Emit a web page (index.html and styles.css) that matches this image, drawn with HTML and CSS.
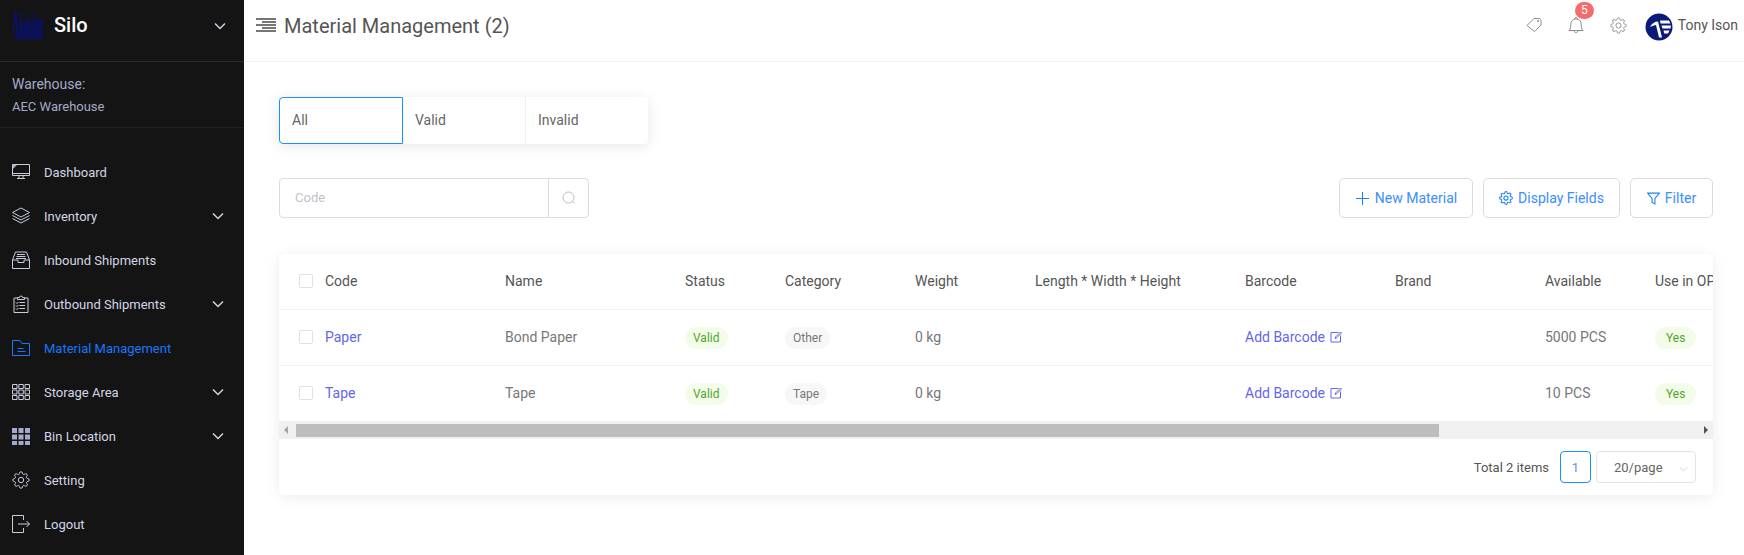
FILE: index.html
```html
<!DOCTYPE html>
<html lang="en">
<head>
<meta charset="utf-8">
<title>Material Management</title>
<link rel="stylesheet" href="styles.css">
</head>
<body>
<svg class="defs" width="0" height="0" aria-hidden="true">
  <symbol id="gear" viewBox="0 0 24 24"><circle cx="12" cy="12" r="3.6"/><path d="M19.4 15a1.65 1.65 0 0 0 .33 1.82l.06.06a2 2 0 0 1 0 2.83 2 2 0 0 1-2.83 0l-.06-.06a1.65 1.65 0 0 0-1.82-.33 1.65 1.65 0 0 0-1 1.51V21a2 2 0 0 1-2 2 2 2 0 0 1-2-2v-.09A1.65 1.65 0 0 0 9 19.4a1.65 1.65 0 0 0-1.82.33l-.06.06a2 2 0 0 1-2.83 0 2 2 0 0 1 0-2.83l.06-.06a1.65 1.65 0 0 0 .33-1.82 1.65 1.65 0 0 0-1.51-1H3a2 2 0 0 1-2-2 2 2 0 0 1 2-2h.09A1.65 1.65 0 0 0 4.6 9a1.65 1.65 0 0 0-.33-1.82l-.06-.06a2 2 0 0 1 0-2.83 2 2 0 0 1 2.83 0l.06.06a1.65 1.65 0 0 0 1.82.33H9a1.65 1.65 0 0 0 1-1.51V3a2 2 0 0 1 2-2 2 2 0 0 1 2 2v.09a1.65 1.65 0 0 0 1 1.51 1.65 1.65 0 0 0 1.82-.33l.06-.06a2 2 0 0 1 2.83 0 2 2 0 0 1 0 2.83l-.06.06a1.65 1.65 0 0 0-.33 1.82V9a1.65 1.65 0 0 0 1.51 1H21a2 2 0 0 1 2 2 2 2 0 0 1-2 2h-.09a1.65 1.65 0 0 0-1.51 1z"/></symbol>
  <symbol id="chev" viewBox="0 0 12 8"><path d="M1 1.500l5 5 5-5"/></symbol>
  <symbol id="edit" viewBox="0 0 12 12"><path d="M8.500 1.500H1v9.500h9.500V4.500M5 7.500l1-2L10.500 1 11.500 2 7 6.500z"/></symbol>
</svg>
<div class="app">
  <aside class="side">
    <div class="brand">
      <svg class="logo" viewBox="0 0 32 32"><path d="M1 28Q2 10 4 2L5 28M3 2Q4 14 6 28M8 30V2M10 30V12M12 30V12M14 28V10M16 30V3M18 30V12M20 28V12M22 30V2M24 30V10M26 28V10M28 30V8M30 30V10"/></svg>
      <span class="brand-name">Silo</span>
      <svg class="chev brand-chev"><use href="#chev"/></svg>
    </div>
    <div class="wh">
      <div class="wh-label">Warehouse:</div>
      <div class="wh-name">AEC Warehouse</div>
    </div>
    <nav class="nav">
      <a class="nav-item">
        <svg class="ico" viewBox="0 0 18 18"><path d="M.5 1.500h17v11H.5zM.5 10.500h17M7 12.500v2.500M11 12.500v2.500M5 15.500h8"/><path class="fill-soft" d="M1 2h4L1 6z"/></svg>
        <span>Dashboard</span>
      </a>
      <a class="nav-item">
        <svg class="ico" viewBox="0 0 18 18"><path d="M9 1l8.500 4.500L9 10 .5 5.500zM.5 8.500L9 13l8.500-4.500M.5 11.500L9 16l8.500-4.500"/></svg>
        <span>Inventory</span>
        <svg class="chev nav-chev"><use href="#chev"/></svg>
      </a>
      <a class="nav-item">
        <svg class="ico" viewBox="0 0 18 18"><path d="M3.500 1h11l3 8v8.500H.5V9zM.5 9h5.500v2.500h6V9h5.500M5 3.500h8M4.500 5.500h9M4 7.500h10"/></svg>
        <span>Inbound Shipments</span>
      </a>
      <a class="nav-item">
        <svg class="ico" viewBox="0 0 18 18"><path d="M5.500 3H2v14.500h14V3h-3.500M5.500 4.500V2.500H7.500a1.500 1.500 0 0 1 3 0h2v2zM7.500 7.500H13M7.500 10.500H13M7.500 13.500H13M4 7.500l1 1 1.500-1.500M4 10.500l1 1 1.500-1.500M4 13.500l1 1 1.500-1.500"/></svg>
        <span>Outbound Shipments</span>
        <svg class="chev nav-chev"><use href="#chev"/></svg>
      </a>
      <a class="nav-item active">
        <svg class="ico" viewBox="0 0 18 18"><path d="M.5 1.500H8L10 4.500h7.500v12H.5zM5.500 9.500h6M5.500 12.500h8"/></svg>
        <span>Material Management</span>
      </a>
      <a class="nav-item">
        <svg class="ico" viewBox="0 0 18 18"><path d="M.5 1.500h4.500v4H.5zM6.800 1.500h4.500v4H6.800zM13 1.500h4.500v4H13zM.5 7h4.500v4H.5zM6.800 7h4.500v4H6.800zM13 7h4.500v4H13zM.5 12.500h4.500v4H.5zM6.800 12.500h4.500v4H6.800zM13 12.500h4.500v4H13z"/></svg>
        <span>Storage Area</span>
        <svg class="chev nav-chev"><use href="#chev"/></svg>
      </a>
      <a class="nav-item">
        <svg class="ico ico-solid" viewBox="0 0 18 18"><path d="M0 1h5v5H0zM6.500 1h5v5h-5zM13 1h5v5h-5zM0 7.500h5v5H0zM6.500 7.500h5v5h-5zM13 7.500h5v5h-5zM0 14h5v5H0zM6.500 14h5v5h-5zM13 14h5v5h-5z"/></svg>
        <span>Bin Location</span>
        <svg class="chev nav-chev"><use href="#chev"/></svg>
      </a>
      <a class="nav-item">
        <svg class="ico ico-gear"><use href="#gear"/></svg>
        <span>Setting</span>
      </a>
      <a class="nav-item">
        <svg class="ico" viewBox="0 0 18 18"><path d="M11.500 5V.5H.5v17h11V13M6 9h11.500M14.500 6l3 3-3 3"/></svg>
        <span>Logout</span>
      </a>
    </nav>
  </aside>

  <main class="main">
    <header class="top">
      <svg class="burger" viewBox="0 0 20 14"><path d="M0 1h20M6 4h14M0 7h20M6 10h14M0 13h20"/></svg>
      <h1 class="title">Material Management (2)</h1>
      <div class="top-actions">
        <svg class="top-ico tag" viewBox="0 0 16 16"><path d="M1 8.500L8 1.500h5.500l1.500 1.500v5l-6.500 6.500zM11.500 3.500h1v1h-1z"/></svg>
        <span class="bell">
          <svg class="top-ico" viewBox="0 0 16 18"><path d="M1 14.500c1.500-1.500 1.800-3 1.800-6 0-3.300 2-5.500 5.200-5.500s5.200 2.200 5.200 5.500c0 3 .3 4.500 1.800 6zM6.500 3c0-2 3-2 3 0M6 14.500c0 3 4 3 4 0"/></svg>
          <b class="badge">5</b>
        </span>
        <svg class="top-ico gear"><use href="#gear"/></svg>
        <span class="user">
          <svg class="avatar" viewBox="0 0 28 28"><circle cx="14" cy="14" r="13.500"/><path class="av-w" d="M5 14Q8 8.500 13 8.500l4 16h-3L11 12Q8 12.500 5 14zM15 7.500h9l1.500 3H15.500zM16.500 12.500H26l-.5 3H17.500zM18.500 17.500h6l-1.500 3h-3.800z"/></svg>
          <span class="user-name">Tony Ison</span>
        </span>
      </div>
    </header>

    <div class="content">
      <div class="tabs">
        <div class="tab on">All</div>
        <div class="tab">Valid</div>
        <div class="tab">Invalid</div>
      </div>

      <div class="toolbar">
        <div class="search">
          <span class="search-input">Code</span>
          <span class="search-btn">
            <svg class="search-ico" viewBox="0 0 14 14"><circle cx="6.500" cy="6.500" r="5.500"/><path d="M10.500 10.500l2 2"/></svg>
          </span>
        </div>
        <div class="btns">
          <button class="btn btn-new"><svg class="btn-ico" viewBox="0 0 12 12"><path d="M6 0v12M0 6h12"/></svg>New Material</button>
          <button class="btn btn-fields"><svg class="btn-ico btn-gear"><use href="#gear"/></svg>Display Fields</button>
          <button class="btn btn-filter"><svg class="btn-ico" viewBox="0 0 12 12"><path d="M.5 1h11L7.300 6v5l-2.600-1.300V6z"/></svg>Filter</button>
        </div>
      </div>

      <section class="card">
        <div class="table-wrap">
          <table class="table">
            <colgroup>
              <col class="c-check"><col class="c-code"><col class="c-name"><col class="c-status"><col class="c-cat"><col class="c-weight"><col class="c-size"><col class="c-bar"><col class="c-brand"><col class="c-avail"><col class="c-use">
            </colgroup>
            <thead>
              <tr>
                <th><span class="check"></span></th><th>Code</th><th>Name</th><th>Status</th><th>Category</th><th>Weight</th><th>Length * Width * Height</th><th>Barcode</th><th>Brand</th><th>Available</th><th class="nowrap">Use in OP</th>
              </tr>
            </thead>
            <tbody>
              <tr>
                <td><span class="check"></span></td><td><a class="link">Paper</a></td><td>Bond Paper</td><td><span class="pill ok">Valid</span></td><td><span class="pill gray">Other</span></td><td>0 kg</td><td></td>
                <td><a class="link">Add Barcode<svg class="edit"><use href="#edit"/></svg></a></td><td></td><td>5000 PCS</td><td><span class="pill ok yes">Yes</span></td>
              </tr>
              <tr>
                <td><span class="check"></span></td><td><a class="link">Tape</a></td><td>Tape</td><td><span class="pill ok">Valid</span></td><td><span class="pill gray">Tape</span></td><td>0 kg</td><td></td>
                <td><a class="link">Add Barcode<svg class="edit"><use href="#edit"/></svg></a></td><td></td><td>10 PCS</td><td><span class="pill ok yes">Yes</span></td>
              </tr>
            </tbody>
          </table>
        </div>
        <div class="hscroll">
          <span class="arrow left"></span>
          <span class="thumb"></span>
          <span class="arrow right"></span>
        </div>
        <div class="pager">
          <span class="total">Total 2 items</span>
          <span class="page">1</span>
          <span class="size">20/page<svg class="size-chev"><use href="#chev"/></svg></span>
        </div>
      </section>
    </div>
  </main>
</div>
</body>
</html>
```

FILE: styles.css
```css
* { box-sizing: border-box; }
html, body { margin: 0; height: 100%; }
body {
  font-family: Roboto, "Liberation Sans", sans-serif;
  font-size: 14px;
  color: #555;
  background: #fff;
  overflow: hidden;
}
.defs { position: absolute; }
svg { display: block; fill: none; stroke: currentColor; stroke-width: 1; }
.app { display: flex; height: 555px; }

/* sidebar */
.side { width: 244px; flex: none; background: #141414; color: #cdd1e2; }
.brand {
  height: 62px;
  display: flex;
  align-items: center;
  padding: 0 18px 10px 12px;
  border-bottom: 1px solid #2c2c2c;
}
.logo { width: 32px; height: 32px; color: #07107a; stroke-width: 1.300; }
.brand-name { margin: -2px 0 0 10px; font-size: 20px; font-weight: 500; color: #fff; }
.chev { width: 12px; height: 8px; stroke-width: 1.500; }
.brand-chev { margin-left: auto; color: #cdd1e2; }
.wh { height: 66px; padding: 13px 12px 0; border-bottom: 1px solid #22222c; color: #a5aac8; }
.wh-label { font-size: 14px; line-height: 18px; }
.wh-name { font-size: 13px; line-height: 18px; margin-top: 5px; }
.nav { padding-top: 22px; }
.nav-item { height: 44px; display: flex; align-items: center; padding: 0 20px 0 12px; font-size: 13px; color: #d3d6e4; }
.nav-item span { margin-left: 14px; }
.nav-item.active { color: #1677ff; }
.nav-item.active .ico { color: #1677ff; }
.ico { width: 18px; height: 18px; flex: none; color: #c9ccdd; }
.ico-gear { stroke-width: 1.300; }
.ico-solid { fill: #a4a9cc; stroke: none; }
.fill-soft { fill: #a9a9a9; stroke: none; }
.nav-chev { margin-left: auto; color: #d3d6e4; }

/* header */
.main { flex: 1; min-width: 0; }
.top {
  height: 62px;
  display: flex;
  align-items: center;
  padding: 0 6px 0 12px;
  border-bottom: 1px solid #f2f2f2;
}
.burger { width: 20px; height: 14px; color: #4a4a4a; margin-top: -11px; stroke-width: 1.500; }
.title { margin: -9px 0 0 8px; font-size: 20px; font-weight: 400; color: #555; line-height: 26px; }
.top-actions { margin-left: auto; display: flex; align-items: center; color: #8d8d8d; margin-top: -11px; }
.top-ico { width: 16px; height: 18px; color: #8d8d8d; }
.tag { height: 16px; margin-right: 26px; margin-left: 2px; }
.bell { position: relative; display: block; margin-right: 26px; }
.badge {
  position: absolute;
  left: 7px;
  top: -14px;
  width: 19px;
  height: 17px;
  border-radius: 9px;
  background: #f56c6c;
  color: #fff;
  font-size: 12px;
  font-weight: 400;
  line-height: 17px;
  text-align: center;
}
.gear { width: 17px; height: 17px; stroke-width: 1.300; }
.user { display: flex; align-items: center; margin-left: 18px; font-size: 14px; color: #555; }
.user-name { margin-top: -1px; }
.avatar { width: 28px; height: 28px; margin-right: 5px; fill: #0a1a7a; stroke: none; margin-top: 4px; }
.av-w { fill: #fff; }

/* content */
.content { padding: 35px 31px 0 35px; }
.tabs {
  display: flex;
  width: 369px;
  height: 47px;
  border-radius: 4px;
  box-shadow: 0 2px 14px rgba(0, 0, 0, .1);
}
.tab {
  flex: 1;
  display: flex;
  align-items: center;
  padding: 0 0 2px 12px;
  color: #666;
  border-right: 1px solid #f0f0f0;
}
.tab:last-child { border-right: 0; }
.tab.on { border: 1px solid #1890ff; border-radius: 4px 0 0 4px; }

.toolbar { display: flex; justify-content: space-between; margin-top: 34px; }
.search { display: flex; width: 310px; height: 40px; border: 1px solid #dcdcdc; border-radius: 4px; }
.search-input { flex: 1; display: flex; align-items: center; padding: 0 0 2px 15px; font-size: 13px; color: #bfc2cc; }
.search-btn { width: 40px; display: flex; align-items: center; justify-content: center; border-left: 1px solid #dcdcdc; }
.search-ico { width: 14px; height: 14px; color: #bbb; }
.btns { display: flex; gap: 10px; }
.btn {
  height: 40px;
  display: flex;
  align-items: center;
  justify-content: center;
  gap: 5px;
  padding: 0;
  border: 1px solid #dcdcdc;
  border-radius: 5px;
  background: #fff;
  color: #3a8eff;
  font: 14px Roboto, "Liberation Sans", sans-serif;
}
.btn-new { width: 134px; gap: 6px; padding-left: 1px; }
.btn-fields { width: 137px; }
.btn-filter { width: 83px; }
.btn-ico { width: 13px; height: 13px; color: #1d80f5; }
.btn-gear { width: 14px; height: 14px; stroke-width: 1.800; }

.card { margin-top: 36px; width: 1434px; border-radius: 6px; box-shadow: 0 2px 14px rgba(0, 0, 0, .08); overflow: hidden; }
.table-wrap { overflow: hidden; }
.table { border-collapse: collapse; table-layout: fixed; width: 1500px; }
.c-check { width: 36px; }
.c-code, .c-name { width: 180px; }
.c-status { width: 100px; }
.c-cat { width: 130px; }
.c-weight { width: 120px; }
.c-size { width: 210px; }
.c-bar, .c-brand { width: 150px; }
.c-avail { width: 110px; }
.c-use { width: 134px; }
th, td { padding: 0 10px; text-align: left; font-weight: 400; border-bottom: 1px solid #f2f2f2; }
th { height: 55px; color: #555; }
td { height: 56px; color: #777; }
tbody tr:last-child td { border-bottom: 0; }
th:first-child, td:first-child { padding: 0 0 0 20px; }
.nowrap { white-space: nowrap; }
.check { display: block; width: 14px; height: 14px; border: 1px solid #dfe0e6; border-radius: 2px; }
.link { display: inline-flex; align-items: center; color: #6366e8; }
.edit { width: 12px; height: 12px; margin-left: 5px; }
.pill { display: inline-block; height: 22px; line-height: 22px; padding: 0 8px; margin-top: 2px; border-radius: 11px; font-size: 12px; }
.ok { background: #f3fce9; color: #52a52c; }
.yes { padding: 0 11px; }
.gray { background: #f7f7f7; color: #777; }

.hscroll { height: 18px; display: flex; align-items: center; background: #f0f0f0; }
.arrow { width: 0; height: 0; border-style: solid; border-width: 4px 0 4px 4px; border-color: transparent; }
.arrow.left { margin-left: 5px; border-width: 4px 4px 4px 0; border-right-color: #a5a5a5; }
.thumb { margin-left: 8px; width: 1143px; height: 13px; background: #bdbdbd; }
.arrow.right { margin-left: auto; margin-right: 5px; border-left-color: #505050; }

.pager { height: 56px; display: flex; align-items: center; justify-content: flex-end; padding-right: 17px; }
.total { font-size: 13px; color: #555; margin-right: 11px; }
.page {
  width: 31px;
  height: 32px;
  display: flex;
  align-items: center;
  justify-content: center;
  border: 1px solid #1890ff;
  border-radius: 4px;
  font-size: 13px;
  color: #5b8ff0;
}
.size {
  width: 100px;
  height: 32px;
  margin-left: 5px;
  display: flex;
  align-items: center;
  padding-left: 17px;
  border: 1px solid #e2e2e8;
  border-radius: 4px;
  font-size: 13px;
  color: #666;
}
.size-chev { width: 9px; height: 6px; margin: 4px 7px 0 auto; color: #c4c7d4; stroke-width: 1; }
```
